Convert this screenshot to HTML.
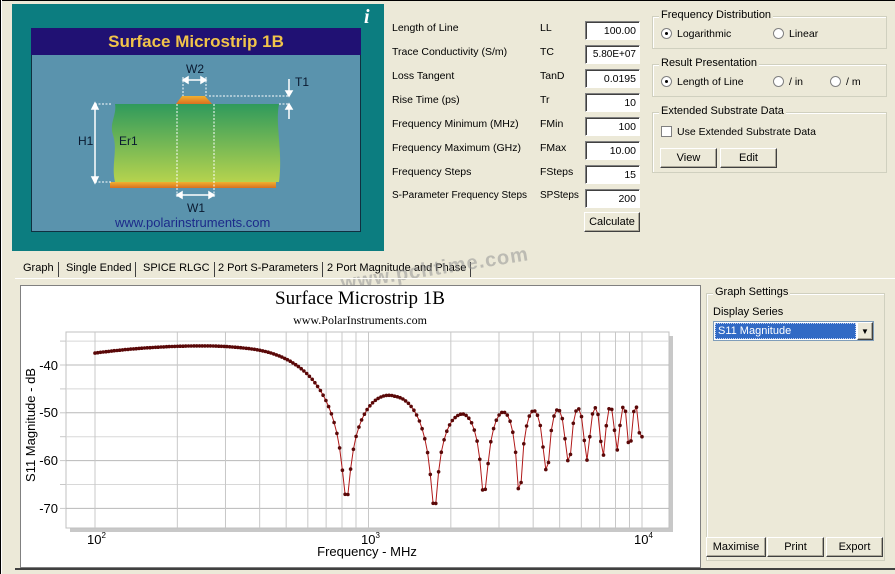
<!DOCTYPE html>
<html><head><meta charset="utf-8"><style>
*{margin:0;padding:0;box-sizing:border-box}
body{width:895px;height:574px;background:#ece9d8;font-family:"Liberation Sans",sans-serif;font-size:11px;color:#000;position:relative;overflow:hidden}
.a{position:absolute}
.lbl{position:absolute;font-size:10.5px;white-space:nowrap}
.inp{position:absolute;background:#fff;border:1px solid;border-color:#808080 #fff #fff #808080;box-shadow:inset 1px 1px 0 #404040;text-align:right;padding:3px 3px 0 0;font-size:10.5px;height:19px;width:55px;white-space:nowrap}
.btn{position:absolute;background:#ece9d8;border:1px solid;border-color:#fff #404040 #404040 #fff;box-shadow:inset -1px -1px 0 #aca899;text-align:center;font-size:11px;padding-top:3px}
.grp{position:absolute;border:1px solid #d0d0bf;box-shadow:1px 1px 0 #fff inset}
.grp>span{position:absolute;top:-8px;left:6px;background:#ece9d8;padding:0 2px;font-size:11px}
.rad{display:inline-block;width:11px;height:11px;border-radius:50%;background:#fff;border:1px solid #808080;vertical-align:-2px;margin-right:5px;position:relative}
.rad.on:after{content:"";position:absolute;left:3px;top:3px;width:3px;height:3px;border-radius:50%;background:#000}
.tab{position:absolute;top:262px;font-size:11px;border-right:1px solid #404040;padding-right:4px;height:15px}
</style></head><body>
<div class="a" style="left:0;top:0;width:895px;height:1px;background:#000"></div>
<div class="a" style="left:0;top:0;width:2px;height:574px;border-left:1px solid #000;border-right:1px solid #fff"></div>

<div class="a" style="left:12px;top:4px;width:372px;height:247px;background:#0c7d80"></div>
<div class="a" style="left:364px;top:6px;color:#fff;font:bold italic 20px 'Liberation Serif',serif">i</div>
<div class="a" style="left:31px;top:28px;width:330px;height:204px;background:#5a93ad;border:1px solid #103040"></div>
<div class="a" style="left:31px;top:28px;width:330px;height:27px;background:#201173;color:#f1c44a;font:bold 17px 'Liberation Sans',sans-serif;text-align:center;padding-top:4px">Surface Microstrip 1B</div>
<svg class="a" style="left:31px;top:55px" width="330" height="177">
<defs><linearGradient id="g" x1="0" y1="0" x2="0" y2="1"><stop offset="0" stop-color="#2f9a5c"/><stop offset="1" stop-color="#b6d34e"/></linearGradient>
<linearGradient id="c" x1="0" y1="0" x2="0" y2="1"><stop offset="0" stop-color="#f0b030"/><stop offset="1" stop-color="#d87020"/></linearGradient></defs>
<path d="M84 49 L248 49 C244 70 252 95 248 127 L84 127 C80 110 87 95 82 80 C78 68 86 60 84 49Z" fill="url(#g)"/>
<rect x="79" y="127" width="166" height="6" fill="url(#c)"/>
<path d="M145 49 L151 41 L174 41 L181 49Z" fill="url(#c)"/>
<g stroke="#fff" stroke-dasharray="2,1.5" stroke-width="1" fill="none">
<line x1="146" y1="49" x2="146" y2="143"/><line x1="183" y1="49" x2="183" y2="143"/>
<line x1="152" y1="22" x2="152" y2="41"/><line x1="175" y1="22" x2="175" y2="41"/>
<line x1="178" y1="41" x2="258" y2="41"/><line x1="64" y1="49" x2="80" y2="49"/><line x1="64" y1="127" x2="80" y2="127"/><line x1="248" y1="49" x2="258" y2="49"/>
</g>
<g stroke="#fff" stroke-width="1.5" fill="#fff">
<line x1="64" y1="52" x2="64" y2="124"/><path d="M61 54 L64 48 L67 54Z M61 122 L64 128 L67 122Z"/>
<line x1="155" y1="25" x2="172" y2="25"/><path d="M157 22 L152 25 L157 28Z M170 22 L175 25 L170 28Z"/>
<line x1="149" y1="140" x2="180" y2="140"/><path d="M151 137 L146 140 L151 143Z M178 137 L183 140 L178 143Z"/>
<line x1="258" y1="24" x2="258" y2="38"/><path d="M255 36 L258 41 L261 36Z"/>
<line x1="258" y1="52" x2="258" y2="64"/><path d="M255 54 L258 49 L261 54Z"/>
</g>
<g font-family="Liberation Sans" font-size="12" fill="#0a1a30">
<text x="155" y="18">W2</text><text x="264" y="31">T1</text><text x="47" y="90">H1</text><text x="88" y="90">Er1</text><text x="156" y="157">W1</text>
<text x="84" y="172" fill="#1c2a8a" font-size="13">www.polarinstruments.com</text></g>
</svg>

<div class="lbl" style="left:392px;top:22px">Length of Line</div><div class="lbl" style="left:540px;top:22px">LL</div><div class="inp" style="left:585px;top:21px">100.00</div>
<div class="lbl" style="left:392px;top:46px">Trace Conductivity (S/m)</div><div class="lbl" style="left:540px;top:46px">TC</div><div class="inp" style="left:585px;top:45px;font-size:10px">5.80E+07</div>
<div class="lbl" style="left:392px;top:70px">Loss Tangent</div><div class="lbl" style="left:540px;top:70px">TanD</div><div class="inp" style="left:585px;top:69px">0.0195</div>
<div class="lbl" style="left:392px;top:94px">Rise Time (ps)</div><div class="lbl" style="left:540px;top:94px">Tr</div><div class="inp" style="left:585px;top:93px">10</div>
<div class="lbl" style="left:392px;top:118px">Frequency Minimum (MHz)</div><div class="lbl" style="left:540px;top:118px">FMin</div><div class="inp" style="left:585px;top:117px">100</div>
<div class="lbl" style="left:392px;top:142px">Frequency Maximum (GHz)</div><div class="lbl" style="left:540px;top:142px">FMax</div><div class="inp" style="left:585px;top:141px">10.00</div>
<div class="lbl" style="left:392px;top:166px">Frequency Steps</div><div class="lbl" style="left:540px;top:166px">FSteps</div><div class="inp" style="left:585px;top:165px">15</div>
<div class="lbl" style="left:392px;top:190px;font-size:10px">S-Parameter Frequency Steps</div><div class="lbl" style="left:540px;top:190px;font-size:10px">SPSteps</div><div class="inp" style="left:585px;top:189px">200</div>
<div class="btn" style="left:584px;top:212px;width:56px;height:20px">Calculate</div>

<div class="grp" style="left:652px;top:16px;width:235px;height:33px"><span>Frequency Distribution</span>
<div class="lbl" style="left:8px;top:11px"><i class="rad on"></i>Logarithmic</div><div class="lbl" style="left:120px;top:11px"><i class="rad"></i>Linear</div></div>
<div class="grp" style="left:652px;top:64px;width:235px;height:33px"><span>Result Presentation</span>
<div class="lbl" style="left:8px;top:11px"><i class="rad on"></i>Length of Line</div><div class="lbl" style="left:120px;top:11px"><i class="rad"></i>/ in</div><div class="lbl" style="left:177px;top:11px"><i class="rad"></i>/ m</div></div>
<div class="grp" style="left:652px;top:112px;width:235px;height:61px"><span>Extended Substrate Data</span>
<div class="lbl" style="left:8px;top:13px"><i class="rad" style="border-radius:0"></i>Use Extended Substrate Data</div>
<div class="btn" style="left:7px;top:35px;width:57px;height:20px">View</div><div class="btn" style="left:67px;top:35px;width:57px;height:20px">Edit</div></div>

<div class="tab" style="left:23px">Graph</div>
<div class="tab" style="left:66px">Single Ended</div>
<div class="tab" style="left:143px">SPICE RLGC</div>
<div class="tab" style="left:218px">2 Port S-Parameters</div>
<div class="tab" style="left:327px">2 Port Magnitude and Phase</div>
<div class="a" style="left:340px;top:258px;transform:rotate(-9deg);font:bold 20px 'Liberation Sans',sans-serif;color:rgba(150,150,150,0.55);letter-spacing:1px">www.pchtime.com</div>
<div class="a" style="left:15px;top:278px;width:880px;height:1px;background:#fff"></div>
<div class="a" style="left:15px;top:568px;width:880px;height:2px;background:#404040"></div>

<div class="a" style="left:20px;top:285px;width:681px;height:283px;background:#fff;border:1px solid #808080"></div>
<svg class="a" style="left:0;top:0" width="895" height="574">
<text x="360" y="304" font-family="Liberation Serif" font-size="19" text-anchor="middle">Surface Microstrip 1B</text>
<text x="360" y="324" font-family="Liberation Serif" font-size="12" text-anchor="middle">www.PolarInstruments.com</text>
<rect x="70" y="336" width="603" height="196" fill="#c8c8c8"/>
<rect x="66" y="332" width="603" height="196" fill="#fff" stroke="#c0c0c0"/>
<g id="grid" stroke="#c8c8c8" stroke-width="1"></g>
<g font-family="Liberation Sans" font-size="13" fill="#000">
<text x="58" y="370" text-anchor="end">-40</text><text x="58" y="417" text-anchor="end">-50</text><text x="58" y="465" text-anchor="end">-60</text><text x="58" y="513" text-anchor="end">-70</text>
<text x="87" y="544">10<tspan font-size="8" dy="-6">2</tspan></text>
<text x="361" y="544">10<tspan font-size="8" dy="-6">3</tspan></text>
<text x="634" y="544">10<tspan font-size="8" dy="-6">4</tspan></text>
<text x="367" y="556" text-anchor="middle">Frequency - MHz</text>
<text transform="translate(35,425) rotate(-90)" text-anchor="middle">S11 Magnitude - dB</text>
</g>
<g id="curve"></g>
</svg>

<div class="grp" style="left:706px;top:293px;width:179px;height:268px"><span>Graph Settings</span></div>
<div class="lbl" style="left:713px;top:306px;font-size:11px">Display Series</div>
<div class="a" style="left:713px;top:321px;width:161px;height:20px;background:#fff;border:1px solid #7f9db9"></div>
<div class="a" style="left:715px;top:323px;width:141px;height:16px;background:#316ac5;color:#fff;font-size:11px;padding:1px 2px;border:1px dotted #c0d0f0">S11 Magnitude</div>
<div class="btn" style="left:857px;top:322px;width:16px;height:18px;padding:0;font-size:8px;line-height:17px">▼</div>
<div class="btn" style="left:706px;top:537px;width:60px;height:20px">Maximise</div>
<div class="btn" style="left:767px;top:537px;width:57px;height:20px">Print</div>
<div class="btn" style="left:826px;top:537px;width:57px;height:20px">Export</div>

<script>
(function(){
var L=Math.log10;
function X(f){return 95+273.5*L(f/100);}
function Y(d){return 365+(-40-d)*4.78;}
var s='';
for(var y=-35;y>=-70;y-=5){s+='<line x1="66" x2="669" y1="'+Y(y)+'" y2="'+Y(y)+'" stroke="'+(y%10==0?'#b8b8b8':'#d8d8d8')+'"/>';}
[100,1000,10000].forEach(function(b){for(var k=1;k<10;k++){var f=b*k;if(f>10000)break;var x=X(f);s+='<line y1="332" y2="528" x1="'+x+'" x2="'+x+'"/>';}});
for(var y=-35;y>=-70;y-=5){s+='<line x1="60" x2="66" y1="'+Y(y)+'" y2="'+Y(y)+'"/>';}
document.getElementById('grid').innerHTML=s;
function P(f){var u=L(f);
 if(u<=2.4)return -36-1.5*Math.pow((u-2.4)/0.4,2);
 if(f<=1250)return -36-21.6*Math.pow(u-2.4,2);
 if(f<=2100)return -46.5-3.8*L(f/1250)/L(2100/1250);
 return -50.3+1.8*L(f/2100)/L(10000/2100);}
function D(f){var a=[[800,-67],[1750,-69],[2650,-66],[3500,-66],[4400,-62],[5300,-60],[6200,-60],[7100,-59],[8000,-58],[9000,-56],[10000,-55]];
 if(f<=a[0][0])return -67;for(var i=1;i<a.length;i++){if(f<=a[i][0]){var t=(f-a[i-1][0])/(a[i][0]-a[i-1][0]);return a[i-1][1]+t*(a[i][1]-a[i-1][1]);}}return -55;}
var pts=[],dots='';
for(var i=0;i<200;i++){var f=100*Math.pow(100,i/199);
 var sv=f<375?1:Math.abs(Math.sin(Math.PI*(f-830)/910));
 sv=Math.max(sv,0.001);var d=P(f)+20*L(sv);var m=D(f);if(d<m)d=m;
 var x=X(f),y=Y(d);pts.push(x.toFixed(1)+','+y.toFixed(1));
 dots+='<circle cx="'+x.toFixed(1)+'" cy="'+y.toFixed(1)+'" r="1.8"/>';}
document.getElementById('curve').innerHTML='<polyline points="'+pts.join(' ')+'" fill="none" stroke="#b01818" stroke-width="1"/><g fill="#5a0808">'+dots+'</g>';
})();
</script>
</body></html>
